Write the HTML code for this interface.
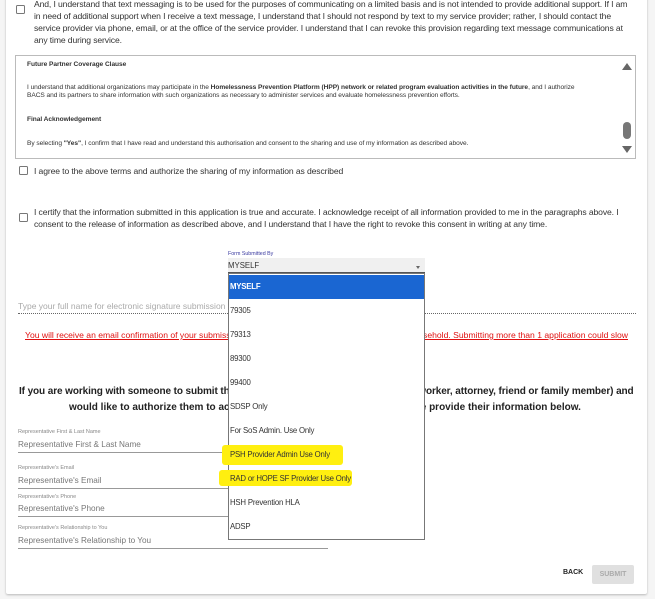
<!DOCTYPE html>
<html><head><meta charset="utf-8"><style>
*{margin:0;padding:0;box-sizing:border-box}
body{width:655px;height:599px;background:#f5f5f5;position:relative;overflow:hidden;font-family:"Liberation Sans",sans-serif;color:#333}
.card{position:absolute;left:6px;top:-4px;width:641px;height:598px;background:#fff;box-shadow:0 1px 2px rgba(0,0,0,.25);border-radius:2px}
.a{position:absolute;white-space:nowrap}
.cb{position:absolute;width:9px;height:9px;border:1.3px solid #777;border-radius:1.5px}
.t{font-size:8.6px;letter-spacing:-0.12px;color:#333;line-height:12px}
.box{position:absolute;left:15px;top:55px;width:621px;height:104px;border:1px solid #bbb;background:#fff}
.s{font-size:6.6px;color:#333;letter-spacing:-0.05px}
.lbl{font-size:5.5px;color:#888}
.inp{font-size:8.2px;color:#777}
.ul{position:absolute;height:1px;background:#999}
.item{position:absolute;left:229px;width:195px;height:24px;font-size:7.8px;color:#333;line-height:24px;padding-left:1px;letter-spacing:-0.2px}
.red{font-size:8.6px;color:#e01010;text-decoration:underline}
</style></head><body>
<div class="card"></div>
<div class="cb" style="left:16px;top:5px"></div>
<div class="a t" style="left:34px;top:-2px">And, I understand that text messaging is to be used for the purposes of communicating on a limited basis and is not intended to provide additional support. If I am</div>
<div class="a t" style="left:34px;top:10px">in need of additional support when I receive a text message, I understand that I should not respond by text to my service provider; rather, I should contact the</div>
<div class="a t" style="left:34px;top:22px">service provider via phone, email, or at the office of the service provider. I understand that I can revoke this provision regarding text message communications at</div>
<div class="a t" style="left:34px;top:34px">any time during service.</div>

<div class="box">
<div class="a s" style="left:11px;top:5px;font-weight:bold">Future Partner Coverage Clause</div>
<div class="a s" style="left:11px;top:28px">I understand that additional organizations may participate in the <b>Homelessness Prevention Platform (HPP) network or related program evaluation activities in the future</b>, and I authorize</div>
<div class="a s" style="left:11px;top:36px">BACS and its partners to share information with such organizations as necessary to administer services and evaluate homelessness prevention efforts.</div>
<div class="a s" style="left:11px;top:60px;font-weight:bold">Final Acknowledgement</div>
<div class="a s" style="left:11px;top:84px">By selecting <b>"Yes"</b>, I confirm that I have read and understand this authorisation and consent to the sharing and use of my information as described above.</div>
<div class="a" style="left:606px;top:7px;width:0;height:0;border-left:5px solid transparent;border-right:5px solid transparent;border-bottom:7px solid #666"></div>
<div class="a" style="left:607px;top:66px;width:8px;height:17px;background:#777;border-radius:4px"></div>
<div class="a" style="left:606px;top:90px;width:0;height:0;border-left:5px solid transparent;border-right:5px solid transparent;border-top:7px solid #666"></div>
</div>

<div class="cb" style="left:19px;top:166px"></div>
<div class="a t" style="left:34px;top:165px">I agree to the above terms and authorize the sharing of my information as described</div>
<div class="cb" style="left:19px;top:213px"></div>
<div class="a t" style="left:34px;top:206px">I certify that the information submitted in this application is true and accurate. I acknowledge receipt of all information provided to me in the paragraphs above. I</div>
<div class="a t" style="left:34px;top:218px">consent to the release of information as described above, and I understand that I have the right to revoke this consent in writing at any time.</div>

<div class="a inp" style="left:18px;top:301px;color:#aaa;font-size:8.5px">Type your full name for electronic signature submission *</div>
<div class="a" style="left:18px;top:313px;width:618px;border-top:1px dotted #666"></div>
<div class="a red" style="left:25px;top:330px">You will receive an email confirmation of your submission. Please only</div>
<div class="a red" style="right:27px;top:330px">submit 1 application per household. Submitting more than 1 application could slow</div>

<div class="a" style="left:19px;top:386px;font-size:10px;font-weight:bold;color:#222;letter-spacing:-0.1px">If you are working with someone to submit this application (e.g. case manager, social worker, attorney, friend or family member) and</div>
<div class="a" style="left:69px;top:402px;font-size:10px;font-weight:bold;color:#222;letter-spacing:0px">would like to authorize them to access your application information, please provide their information below.</div>

<div class="a lbl" style="left:18px;top:429px">Representative First &amp; Last Name</div>
<div class="a inp" style="left:18px;top:440px">Representative First &amp; Last Name</div>
<div class="ul" style="left:18px;top:452px;width:310px"></div>
<div class="a lbl" style="left:18px;top:465px">Representative's Email</div>
<div class="a inp" style="left:18px;top:476px">Representative's Email</div>
<div class="ul" style="left:18px;top:488px;width:310px"></div>
<div class="a lbl" style="left:18px;top:494px">Representative's Phone</div>
<div class="a inp" style="left:18px;top:504px">Representative's Phone</div>
<div class="ul" style="left:18px;top:516px;width:310px"></div>
<div class="a lbl" style="left:18px;top:525px">Representative's Relationship to You</div>
<div class="a inp" style="left:18px;top:536px">Representative's Relationship to You</div>
<div class="ul" style="left:18px;top:548px;width:310px"></div>

<div class="a" style="left:563px;top:569px;font-size:7px;font-weight:bold;color:#222">BACK</div>
<div class="a" style="left:592px;top:565px;width:42px;height:19px;background:#e0e0e0;border-radius:2px;font-size:7px;font-weight:bold;color:#aaa;text-align:center;line-height:19px">SUBMIT</div>

<div class="a" style="left:228px;top:251px;font-size:5.3px;color:#3a3aa0">Form Submitted By</div>
<div class="a" style="left:228px;top:258px;width:197px;height:15px;background:#f0f0f0;border-bottom:1px solid #555"></div>
<div class="a" style="left:228px;top:261px;font-size:7.8px;color:#333">MYSELF</div>
<div class="a" style="left:416px;top:266px;border-left:2.5px solid transparent;border-right:2.5px solid transparent;border-top:3px solid #666"></div>
<div class="a" style="left:228px;top:273px;width:197px;height:267px;background:#fff;border:1px solid #777"></div>
<div class="a" style="left:222px;top:445px;width:121px;height:20px;background:#ffef10;border-radius:3px"></div>
<div class="a" style="left:219px;top:470px;width:133px;height:16px;background:#ffef10;border-radius:3px"></div>
<div class="item" style="top:275px;background:#1a66d2;color:#fff;font-weight:bold">MYSELF</div>
<div class="item" style="top:299px">79305</div>
<div class="item" style="top:323px">79313</div>
<div class="item" style="top:347px">89300</div>
<div class="item" style="top:371px">99400</div>
<div class="item" style="top:395px">SDSP Only</div>
<div class="item" style="top:419px">For SoS Admin. Use Only</div>
<div class="item" style="top:443px;background:transparent">PSH Provider Admin Use Only</div>
<div class="item" style="top:467px;background:transparent">RAD or HOPE SF Provider Use Only</div>
<div class="item" style="top:491px">HSH Prevention HLA</div>
<div class="item" style="top:515px">ADSP</div>
</body></html>
